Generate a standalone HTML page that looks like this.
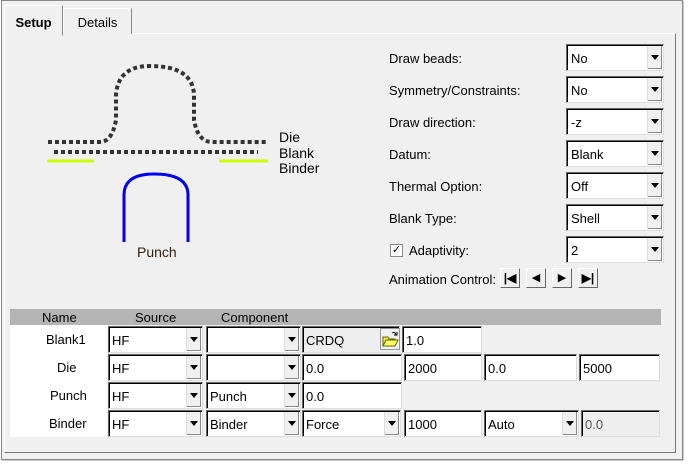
<!DOCTYPE html>
<html><head><style>
body{margin:0;width:689px;height:466px;background:#fff;font-family:"Liberation Sans",sans-serif;font-size:13px;color:#000;position:relative;overflow:hidden}
.a{position:absolute}
.win{left:1px;top:0;width:680px;height:458px;border:1px solid #888;background:#f0f0f0;box-shadow:1px 1px 0 #ccc}
.panel{left:4px;top:33px;width:670px;height:418px;border:1px solid #fff;border-right-color:#777;border-bottom-color:#777;background:#f0f0f0}
.tab{top:8px;height:25px;border:1px solid #fff;border-right-color:#888;border-bottom:none;background:#f0f0f0;text-align:center;line-height:28px}
.lbl{left:389px}
.cb{background:#fff;border:1px solid #666;border-right-color:#ddd;border-bottom-color:#ddd;box-sizing:border-box;box-shadow:inset 1px 1px 0 #000;padding-left:4px;line-height:27px}
.ar{position:absolute;right:1px;top:1px;bottom:1px;width:14px;background:#f0f0f0;border-left:1px solid #ddd;box-shadow:inset -1px -1px 0 #888}
.ar:after{content:"";position:absolute;left:3px;top:9px;border:4px solid transparent;border-top:5px solid #000;border-bottom:none}
.tb{font-family:"Liberation Sans Narrow","Liberation Sans",sans-serif;font-size:13px}
.tc{height:27px;line-height:28px;padding-left:3px}
.btn{top:268px;width:20px;height:20px;background:#f0f0f0;border:1px solid #fff;border-right-color:#666;border-bottom-color:#666;box-sizing:border-box}
</style></head><body>
<div class="a win"></div>
<div class="a panel"></div>
<div class="a tab" style="left:63px;width:67px">Details</div>
<div class="a tab" style="left:4px;top:5px;height:29px;width:57px;font-weight:bold;line-height:34px;border-bottom:1px solid #f0f0f0">Setup</div>

<svg class="a" style="left:0;top:0" width="340" height="270">
<path d="M48 142 H100 Q112 142 116 120 V95 Q118 66 150 66 Q193 66 194 95 V120 Q198 142 212 142 H268" fill="none" stroke="#333" stroke-width="4" stroke-dasharray="4 3"/>
<path d="M54 152 H258" stroke="#333" stroke-width="4" stroke-dasharray="4 3"/>
<path d="M47 161 H94 M219 161 H268" stroke="#ccff00" stroke-width="3"/>
<path d="M124 242 V195 Q124 174 154 174 Q188 174 188 195 V242" fill="none" stroke="#0000ee" stroke-width="3"/>
<text x="279" y="142" font-family="Liberation Sans" font-size="14">Die</text>
<text x="279" y="158" font-family="Liberation Sans" font-size="14">Blank</text>
<text x="279" y="173" font-family="Liberation Sans" font-size="14">Binder</text>
<text x="137" y="257" font-family="Liberation Sans" font-size="14" fill="#321">Punch</text>
</svg>

<div class="a lbl" style="top:51px">Draw beads:</div>
<div class="a lbl" style="top:83px">Symmetry/Constraints:</div>
<div class="a lbl" style="top:115px">Draw direction:</div>
<div class="a lbl" style="top:147px">Datum:</div>
<div class="a lbl" style="top:179px">Thermal Option:</div>
<div class="a lbl" style="top:211px">Blank Type:</div>
<div class="a" style="left:390px;top:244px;width:11px;height:11px;border:1px solid #888;background:#fff;font-size:11px;line-height:11px;text-align:center">✓</div>
<div class="a" style="left:409px;top:243px">Adaptivity:</div>
<div class="a lbl" style="top:272px">Animation Control:</div>

<div class="a cb" style="left:566px;top:44px;width:98px;height:27px">No<i class="ar"></i></div>
<div class="a cb" style="left:566px;top:76px;width:98px;height:27px">No<i class="ar"></i></div>
<div class="a cb" style="left:566px;top:108px;width:98px;height:27px">-z<i class="ar"></i></div>
<div class="a cb" style="left:566px;top:140px;width:98px;height:27px">Blank<i class="ar"></i></div>
<div class="a cb" style="left:566px;top:172px;width:98px;height:27px">Off<i class="ar"></i></div>
<div class="a cb" style="left:566px;top:204px;width:98px;height:27px">Shell<i class="ar"></i></div>
<div class="a cb" style="left:566px;top:236px;width:98px;height:27px">2<i class="ar"></i></div>

<div class="a btn" style="left:500px;font-size:12px;line-height:18px;text-align:center;font-weight:bold">|◀</div>
<div class="a btn" style="left:526px;font-size:11px;line-height:18px;text-align:center">◀</div>
<div class="a btn" style="left:552px;font-size:11px;line-height:18px;text-align:center">▶</div>
<div class="a btn" style="left:578px;font-size:12px;line-height:18px;text-align:center;font-weight:bold">▶|</div>

<div class="a" style="left:10px;top:309px;width:651px;height:16px;background:#b4b4b4"></div>
<div class="a tb" style="left:42px;top:310px">Name</div>
<div class="a tb" style="left:135px;top:310px">Source</div>
<div class="a tb" style="left:221px;top:310px">Component</div>
<div class="a" style="left:10px;top:325px;width:97px;height:112px;background:#fff"></div>
<div class="a tb" style="left:46px;top:332px">Blank1</div>
<div class="a tb" style="left:57px;top:360px">Die</div>
<div class="a tb" style="left:50px;top:388px">Punch</div>
<div class="a tb" style="left:49px;top:416px">Binder</div>

<!-- row1 -->
<div class="a cb tb tc" style="left:108px;top:326px;width:95px">HF<i class="ar"></i></div>
<div class="a cb tb tc" style="left:206px;top:326px;width:95px"><i class="ar"></i></div>
<div class="a cb tb tc" style="left:302px;top:326px;width:98px;background:#eee">CRDQ</div>
<svg class="a" style="left:380px;top:328px" width="20" height="22"><rect x="0.5" y="0.5" width="19" height="21" fill="#f0f0f0" stroke="#999"/><path d="M3 9 H8 L9 11 H15 V18 H3 Z" fill="#ee4" stroke="#660" stroke-width="1"/><path d="M3 18 L6 12 H18 L15 18 Z" fill="#ff6" stroke="#660"/><path d="M12 5 Q15 3 16 7 M14 7 H17 V4" fill="none" stroke="#000"/></svg>
<div class="a cb tb tc" style="left:402px;top:326px;width:80px">1.0</div>
<!-- row2 -->
<div class="a cb tb tc" style="left:108px;top:354px;width:95px">HF<i class="ar"></i></div>
<div class="a cb tb tc" style="left:206px;top:354px;width:95px"><i class="ar"></i></div>
<div class="a cb tb tc" style="left:302px;top:354px;width:100px">0.0</div>
<div class="a cb tb tc" style="left:404px;top:354px;width:78px">2000</div>
<div class="a cb tb tc" style="left:484px;top:354px;width:93px">0.0</div>
<div class="a cb tb tc" style="left:579px;top:354px;width:81px">5000</div>
<!-- row3 -->
<div class="a cb tb tc" style="left:108px;top:382px;width:95px">HF<i class="ar"></i></div>
<div class="a cb tb tc" style="left:206px;top:382px;width:95px">Punch<i class="ar"></i></div>
<div class="a cb tb tc" style="left:302px;top:382px;width:100px">0.0</div>
<!-- row4 -->
<div class="a cb tb tc" style="left:108px;top:410px;width:95px">HF<i class="ar"></i></div>
<div class="a cb tb tc" style="left:206px;top:410px;width:95px">Binder<i class="ar"></i></div>
<div class="a cb tb tc" style="left:302px;top:410px;width:99px">Force<i class="ar"></i></div>
<div class="a cb tb tc" style="left:404px;top:410px;width:78px">1000</div>
<div class="a cb tb tc" style="left:484px;top:410px;width:95px">Auto<i class="ar"></i></div>
<div class="a cb tb tc" style="left:581px;top:410px;width:79px;background:#eee;color:#555">0.0</div>
</body></html>
